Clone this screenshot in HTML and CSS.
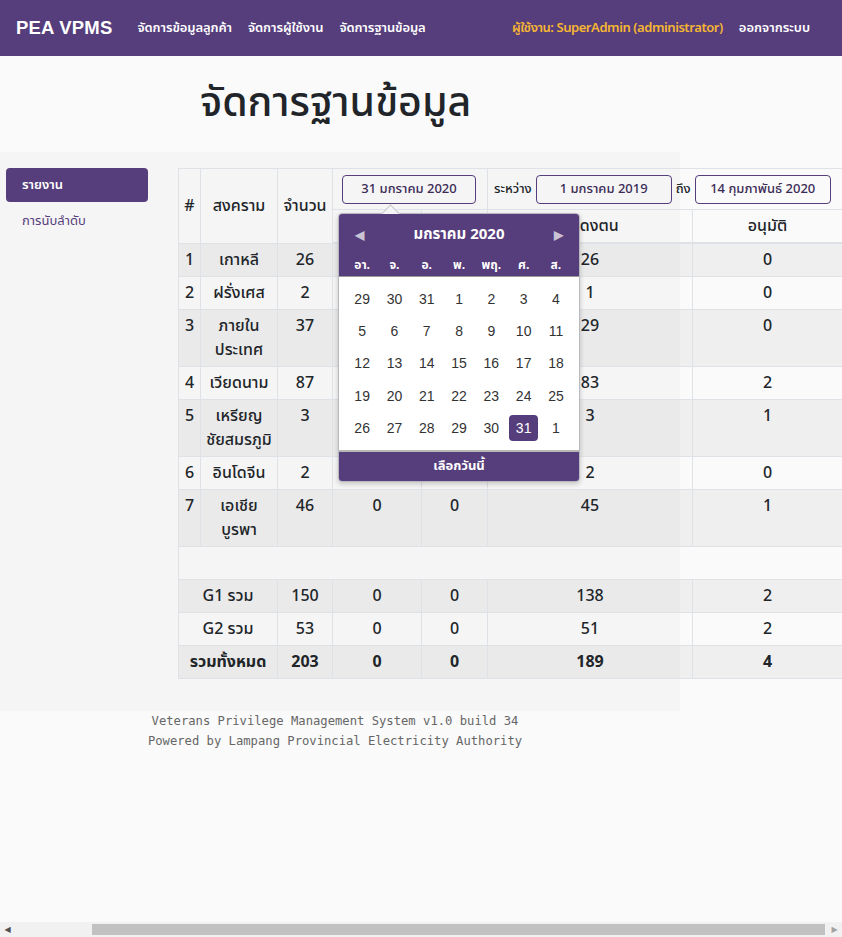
FILE: index.html
```html
<!DOCTYPE html>
<html lang="th">
<head>
<meta charset="utf-8">
<title>PEA VPMS</title>
<link rel="stylesheet" href="styles.css">
</head>
<body>
<div class="app">
  <nav class="navbar">
    <span class="brand">PEA VPMS</span>
    <ul class="nav-links">
      <li>จัดการข้อมูลลูกค้า</li>
      <li>จัดการผู้ใช้งาน</li>
      <li>จัดการฐานข้อมูล</li>
    </ul>
    <ul class="nav-right">
      <li class="user">ผู้ใช้งาน: SuperAdmin (administrator)</li>
      <li>ออกจากระบบ</li>
    </ul>
  </nav>

  <main class="content">
    <h1 class="page-title">จัดการฐานข้อมูล</h1>

    <section class="panel">
      <aside class="sidebar">
        <a class="side-item active">รายงาน</a>
        <a class="side-item">การนับลำดับ</a>
      </aside>

      <table class="report">
        <colgroup>
          <col class="c1"><col class="c2"><col class="c3"><col class="c4"><col class="c5"><col class="c6"><col class="c7">
        </colgroup>
        <thead>
          <tr class="head-top">
            <th rowspan="2" class="mid">#</th>
            <th rowspan="2" class="mid">สงคราม</th>
            <th rowspan="2" class="mid">จำนวน</th>
            <th colspan="2">
              <div class="picker">
                <span class="date-input">31 มกราคม 2020</span>
                <div class="calendar">
                  <div class="cal-head">
                    <div class="cal-title">
                      <span class="cal-arrow">&#9664;</span>
                      <span>มกราคม 2020</span>
                      <span class="cal-arrow">&#9654;</span>
                    </div>
                    <div class="cal-week">
                      <span>อา.</span><span>จ.</span><span>อ.</span><span>พ.</span><span>พฤ.</span><span>ศ.</span><span>ส.</span>
                    </div>
                  </div>
                  <div class="cal-days">
                    <span>29</span><span>30</span><span>31</span><span>1</span><span>2</span><span>3</span><span>4</span>
                    <span>5</span><span>6</span><span>7</span><span>8</span><span>9</span><span>10</span><span>11</span>
                    <span>12</span><span>13</span><span>14</span><span>15</span><span>16</span><span>17</span><span>18</span>
                    <span>19</span><span>20</span><span>21</span><span>22</span><span>23</span><span>24</span><span>25</span>
                    <span>26</span><span>27</span><span>28</span><span>29</span><span>30</span><span class="selected">31</span><span>1</span>
                  </div>
                  <div class="cal-foot">เลือกวันนี้</div>
                </div>
              </div>
            </th>
            <th colspan="2">
              <div class="range">
                <span>ระหว่าง</span>
                <span class="date-input">1 มกราคม 2019</span>
                <span>ถึง</span>
                <span class="date-input">14 กุมภาพันธ์ 2020</span>
              </div>
            </th>
          </tr>
          <tr class="head-bottom">
            <th></th>
            <th></th>
            <th>แสดงตน</th>
            <th>อนุมัติ</th>
          </tr>
        </thead>
        <tbody>
          <tr class="odd"><td>1</td><td>เกาหลี</td><td>26</td><td></td><td></td><td>26</td><td>0</td></tr>
          <tr><td>2</td><td>ฝรั่งเศส</td><td>2</td><td></td><td></td><td>1</td><td>0</td></tr>
          <tr class="odd"><td>3</td><td>ภายใน<br>ประเทศ</td><td>37</td><td></td><td></td><td>29</td><td>0</td></tr>
          <tr><td>4</td><td>เวียดนาม</td><td>87</td><td></td><td></td><td>83</td><td>2</td></tr>
          <tr class="odd"><td>5</td><td>เหรียญ<br>ชัยสมรภูมิ</td><td>3</td><td></td><td></td><td>3</td><td>1</td></tr>
          <tr><td>6</td><td>อินโดจีน</td><td>2</td><td></td><td></td><td>2</td><td>0</td></tr>
          <tr class="odd"><td>7</td><td>เอเชีย<br>บูรพา</td><td>46</td><td>0</td><td>0</td><td>45</td><td>1</td></tr>
          <tr class="blank"><td colspan="7"></td></tr>
          <tr class="odd"><td colspan="2">G1 รวม</td><td>150</td><td>0</td><td>0</td><td>138</td><td>2</td></tr>
          <tr><td colspan="2">G2 รวม</td><td>53</td><td>0</td><td>0</td><td>51</td><td>2</td></tr>
          <tr class="odd total"><td colspan="2">รวมทั้งหมด</td><td>203</td><td>0</td><td>0</td><td>189</td><td>4</td></tr>
        </tbody>
      </table>
    </section>

    <footer class="footer">
      <div>Veterans Privilege Management System v1.0 build 34</div>
      <div>Powered by Lampang Provincial Electricity Authority</div>
    </footer>
  </main>

  <div class="hscroll">
    <span class="sb-arrow left">&#9664;</span>
    <div class="sb-track"><div class="sb-thumb"></div></div>
    <span class="sb-arrow right">&#9654;</span>
  </div>
</div>
</body>
</html>
```

FILE: styles.css
```css
* { box-sizing: border-box; }

html, body {
  margin: 0;
  height: 100%;
  overflow: hidden;
}

body {
  background: #fafafa;
  color: #212529;
  font-family: "Noto Sans Thai", "Noto Sans", "DejaVu Sans", sans-serif;
}

.app {
  display: flex;
  flex-direction: column;
  height: 100vh;
}

/* NAVBAR */
.navbar {
  height: 56px;
  flex: none;
  background: #563d7c;
  color: #fff;
  display: flex;
  align-items: center;
  padding: 0 16px;
}
.brand {
  font-family: "Liberation Sans", sans-serif;
  font-weight: 700;
  font-size: 18.5px;
  letter-spacing: 0.2px;
  margin-right: 25px;
}
.nav-links, .nav-right {
  list-style: none;
  margin: 0;
  padding: 0;
  display: flex;
  gap: 16px;
  font-size: 13px;
  font-weight: 600;
}
.nav-links { letter-spacing: -0.1px; }
.nav-right {
  margin-left: auto;
  margin-right: 16px;
}
.user {
  color: #f7b731;
  letter-spacing: -0.45px;
}

/* CONTENT */
.content {
  flex: 1;
  min-height: 0;
}
.page-title {
  margin: 0;
  height: 96px;
  padding: 21px 0 0 200px;
  font-size: 41px;
  font-weight: 500;
  line-height: 52px;
  color: #212529;
}

.panel {
  width: 680px;
  background: #f5f5f5;
  display: flex;
  align-items: flex-start;
  padding: 16px 0 32px 6px;
}

.sidebar {
  width: 142px;
  flex: none;
  display: flex;
  flex-direction: column;
  margin-right: 30px;
}
.side-item {
  display: block;
  padding: 0 16px;
  height: 34px;
  line-height: 34px;
  font-size: 13px;
  color: #563d7c;
  border-radius: 4px;
}
.side-item.active {
  background: #563d7c;
  color: #fff;
  font-weight: 600;
  line-height: 35px;
}
.side-item + .side-item { margin-top: 2px; }

/* TABLE */
.report {
  flex: none;
  width: 664px;
  table-layout: fixed;
  border-collapse: collapse;
  font-size: 16px;
  line-height: 24px;
  text-align: center;
}
.c1 { width: 22px; }
.c2 { width: 77px; }
.c3 { width: 55px; }
.c4 { width: 89px; }
.c5 { width: 66px; }
.c6 { width: 205px; }
.c7 { width: 150px; }

.report th, .report td {
  border: 1px solid #dee2e6;
  padding: 4px 2px;
  vertical-align: top;
  font-weight: 500;
}
.report th.mid { vertical-align: middle; }
.head-top th { height: 41px; padding: 5px 4px; vertical-align: middle; }
.head-bottom th {
  height: 33px;
  border-bottom: 2px solid #dee2e6;
}
.report tbody tr.odd { background: rgba(0, 0, 0, 0.045); }
.report tbody td { height: 33px; }
.blank td { height: 32px; }
.total td { font-weight: 700; }

.date-input {
  display: inline-block;
  height: 29px;
  line-height: 27px;
  border: 1px solid #563d7c;
  border-radius: 4px;
  font-size: 13px;
  color: #3a2a56;
  text-align: center;
  white-space: nowrap;
}

.picker {
  position: relative;
  padding-left: 5px;
  text-align: left;
}
.picker .date-input { width: 134px; }

.range {
  display: flex;
  align-items: center;
  gap: 4px;
  font-size: 13px;
  font-weight: 500;
  padding-left: 2px;
}
.range .date-input { width: 136px; }

/* CALENDAR POPUP */
.calendar {
  position: absolute;
  left: 1px;
  top: 38px;
  width: 242px;
  background: #fff;
  border: 1px solid #b9b9c0;
  border-radius: 4px;
  box-shadow: 0 2px 5px rgba(0, 0, 0, 0.2);
  z-index: 5;
  font-family: "Liberation Sans", sans-serif;
}
.calendar::before {
  content: "";
  position: absolute;
  top: -7px;
  left: 45px;
  width: 12px;
  height: 12px;
  border-left: 1px solid #c8c8d0;
  border-top: 1px solid #c8c8d0;
  transform: rotate(45deg);
  background: #f5f5f5;
}
.cal-head {
  background: #563d7c;
  color: #fff;
  border-radius: 3px 3px 0 0;
  border-bottom: 1px solid #999;
  position: relative;
}
.cal-title {
  display: flex;
  justify-content: space-between;
  align-items: center;
  height: 39px;
  padding: 3px 16px 0 16px;
  font-weight: 700;
  font-size: 15px;
  font-family: "Noto Sans Thai", "Liberation Sans", sans-serif;
}
.cal-arrow {
  color: #c9c3d3;
  font-size: 12px;
}
.cal-week {
  display: grid;
  grid-template-columns: repeat(7, 32.3px);
  padding: 0 7px 0 7px;
  height: 23px;
  align-items: start;
  font-size: 12px;
  font-weight: 700;
  text-align: center;
  font-family: "Noto Sans Thai", "Liberation Sans", sans-serif;
}
.cal-days {
  display: grid;
  grid-template-columns: repeat(7, 32.3px);
  grid-auto-rows: 32.3px;
  padding: 6px 7px 6px 7px;
  font-size: 14px;
  color: #333;
  text-align: center;
}
.cal-days span {
  display: flex;
  align-items: center;
  justify-content: center;
  margin: 3px 2px;
  border-radius: 4px;
}
.cal-days span.selected {
  background: #563d7c;
  color: #fff;
}
.cal-foot {
  background: #563d7c;
  color: #fff;
  border-top: 2px solid #b8b8b8;
  height: 31px;
  line-height: 29px;
  text-align: center;
  font-size: 13px;
  font-weight: 700;
  border-radius: 0 0 3px 3px;
  font-family: "Noto Sans Thai", "Liberation Sans", sans-serif;
}

/* FOOTER */
.footer {
  width: 670px;
  padding-top: 0;
  text-align: center;
  font-family: "DejaVu Sans Mono", monospace;
  font-size: 12.2px;
  line-height: 20px;
  color: #666;
}

/* FAKE HORIZONTAL SCROLLBAR */
.hscroll {
  flex: none;
  height: 15px;
  background: #f1f1f1;
  display: flex;
  align-items: center;
}
.sb-arrow {
  width: 15px;
  font-size: 8px;
  text-align: center;
  color: #505050;
  font-family: "DejaVu Sans", sans-serif;
}
.sb-arrow.right { color: #a3a3a3; }
.sb-track {
  flex: 1;
  height: 11px;
  display: flex;
  padding-left: 77px;
  padding-right: 2px;
}
.sb-thumb {
  flex: 1;
  background: #c1c1c1;
}
```
